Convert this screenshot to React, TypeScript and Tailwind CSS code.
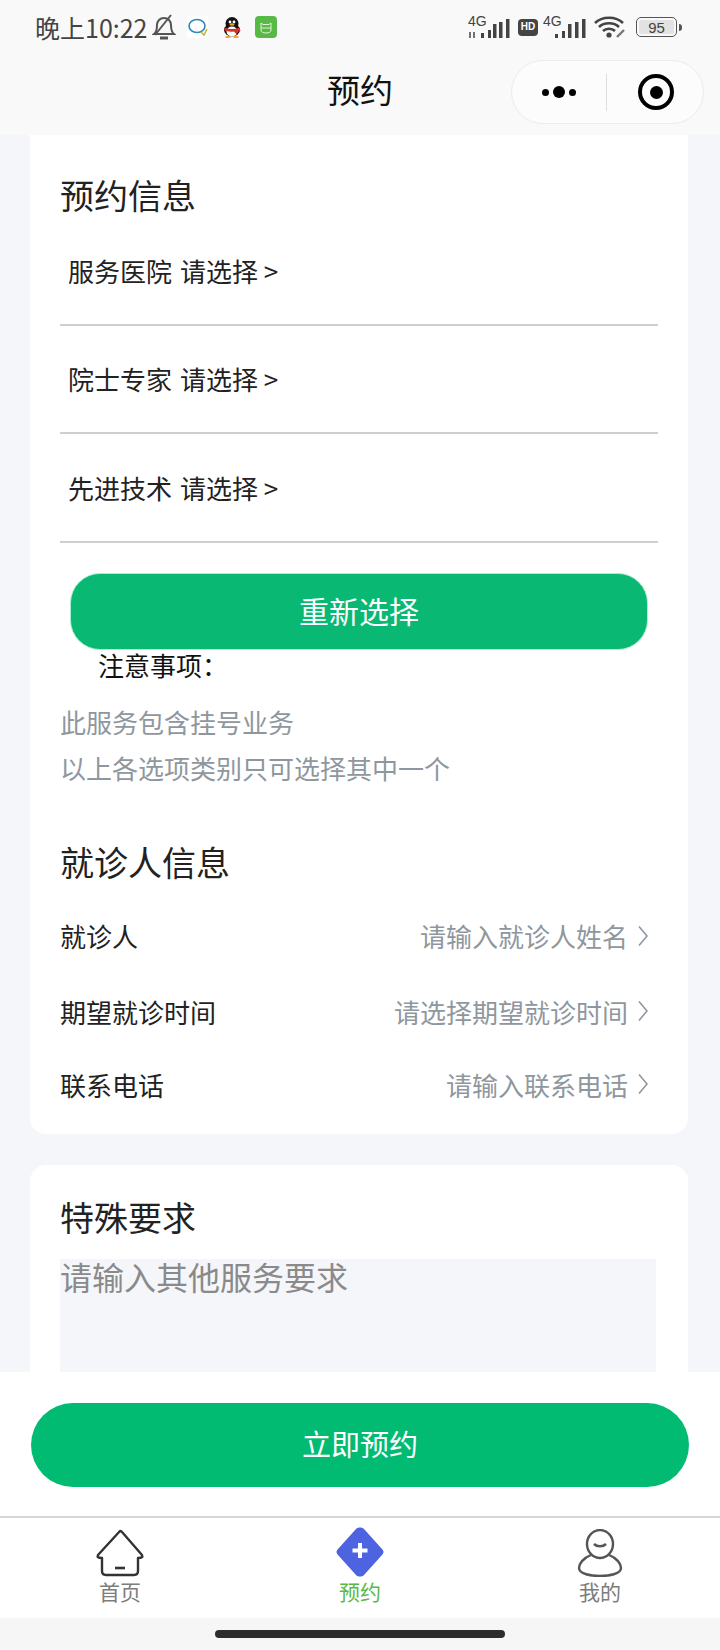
import React from "react";

const font = { fontFamily: '"Noto Sans CJK SC", "Noto Sans", sans-serif' };
const latin = { fontFamily: '"Liberation Sans", sans-serif' };

function Picker({ label }: { label: string }) {
  return (
    <div className="h-[104px] border-b-2 border-[#cfcfcf] pl-2 pt-[29px] text-[26px] leading-[40px] text-[#222]">
      {label}<span className="ml-[8px]">请选择 &gt;</span>
    </div>
  );
}

function InfoRow({ label, hint, h }: { label: string; hint: string; h: string }) {
  return (
    <div className={`flex items-center justify-between text-[26px] ${h}`}>
      <span className="text-[#222]">{label}</span>
      <span className="flex items-center text-[#8f979e]">
        {hint}
        <svg width="10" height="22" viewBox="0 0 10 22" fill="none" className="ml-[10px] mr-[10px]">
          <path d="M1 1.500l8 9.500-8 9.500" stroke="#8f979e" strokeWidth="1.600" />
        </svg>
      </span>
    </div>
  );
}

function StatusBar() {
  return (
    <div className="flex h-[54px] items-center justify-between pl-[35px] pr-[38px]">
      <div className="flex items-center">
        <span className="text-[25px] leading-none text-[#444]">晚上10:22</span>
        <svg width="24" height="26" viewBox="0 0 24 26" fill="none" className="ml-[5px]" stroke="#555" strokeWidth="2">
          <path d="M2 20c3-2 3-6 3-9 0-4 3-7 7-7s7 3 7 7c0 3 0 7 3 9z" />
          <path d="M3 21L19 1" />
          <path d="M8 24h8" strokeWidth="3" />
        </svg>
        <div className="ml-[11px] flex h-[22px] w-[21px] items-center justify-center bg-white">
          <svg width="20" height="18" viewBox="0 0 20 18" fill="none">
            <ellipse cx="9" cy="8" rx="8" ry="6.500" stroke="#2f86b8" strokeWidth="1.600" />
            <path d="M13 14l3 3 3-6" stroke="#c9b23a" strokeWidth="1.600" />
          </svg>
        </div>
        <svg width="20" height="21" viewBox="0 0 20 21" className="ml-[14px]">
          <ellipse cx="10" cy="6.500" rx="6.500" ry="6.500" fill="#111" />
          <ellipse cx="10" cy="13" rx="8" ry="6.500" fill="#111" />
          <ellipse cx="10" cy="14.500" rx="5.500" ry="5" fill="#fff" />
          <circle cx="8" cy="5" r="1.400" fill="#fff" />
          <circle cx="12" cy="5" r="1.400" fill="#fff" />
          <ellipse cx="10" cy="7.500" rx="2.500" ry="1.200" fill="#f0a020" />
          <path d="M2.500 10.500c5 2 10 2 15 0l1 3.500-3.500 1v3l-3-3.500c-4 .5-7 0-9.500-1z" fill="#d3322c" />
          <ellipse cx="6" cy="20" rx="3" ry="1" fill="#f0a020" />
          <ellipse cx="14" cy="20" rx="3" ry="1" fill="#f0a020" />
        </svg>
        <div className="ml-[13px] flex h-[22px] w-[22px] items-center justify-center rounded-[4px] bg-[#58b947]">
          <svg width="14" height="14" viewBox="0 0 14 14" fill="none" stroke="#dff3d8" strokeWidth="1">
            <path d="M2 3l2 1.500h6L12 3v7c0 2-2 3-5 3s-5-1-5-3z" />
            <path d="M2 8h10" />
          </svg>
        </div>
      </div>
      <div className="flex items-center">
        <div className="relative h-[22px] w-[43px]">
          <span className="absolute left-0 top-[-2px] text-[14px] leading-none text-[#444]" style={latin}>4G</span>
          <svg width="43" height="22" viewBox="0 0 43 22" fill="#444" className="absolute left-0 top-0">
            <path d="M2 16v6M6 16v6" stroke="#444" strokeWidth="1.500" />
            <rect x="13" y="17" width="3" height="5" /><rect x="20" y="14" width="3" height="8" />
            <rect x="25" y="8" width="3.500" height="14" /><rect x="31" y="6" width="3.500" height="16" />
            <rect x="38" y="3" width="3.500" height="19" />
          </svg>
        </div>
        <span className="ml-[7px] flex h-[17px] w-[20px] items-center justify-center rounded-[4px] bg-[#444] text-[10px] font-bold leading-none text-white" style={latin}>HD</span>
        <div className="relative ml-[4px] h-[22px] w-[44px]">
          <span className="absolute left-[1px] top-[-2px] text-[14px] leading-none text-[#444]" style={latin}>4G</span>
          <svg width="44" height="22" viewBox="0 0 44 22" fill="#444" className="absolute left-0 top-0">
            <rect x="13" y="18" width="3" height="4" /><rect x="20" y="15" width="3" height="7" />
            <rect x="26" y="8" width="3.500" height="14" /><rect x="33" y="6" width="3.500" height="16" />
            <rect x="40" y="3" width="3.500" height="19" />
          </svg>
        </div>
        <svg width="34" height="22" viewBox="0 0 34 22" fill="none" stroke="#444" strokeWidth="2.600" className="ml-[7px]">
          <path d="M2 7c7-7 21-7 28 0M6 11c5-5 15-5 20 0M10 15c3-3 9-3 12 0" />
          <circle cx="16" cy="19" r="2.600" fill="#444" stroke="none" />
          <path d="M24 21l7-7" strokeWidth="2.400" stroke="#777" />
        </svg>
        <div className="relative ml-[9px] flex h-[20px] w-[41px] items-center rounded-[5px] border border-[#555] p-[2px]">
          <div className="flex h-full w-full items-center justify-center rounded-[2px] bg-[#e2e2e2] text-[15px] leading-none text-[#444]" style={latin}>95</div>
        </div>
        <div className="ml-[2px] h-[7px] w-[3px] rounded-r bg-[#555]" />
      </div>
    </div>
  );
}

function NavBar() {
  return (
    <div className="relative flex h-[81px] items-center justify-center">
      <span className="mt-[-10px] text-[33px] text-[#111]">预约</span>
      <div className="absolute right-[16px] top-[6px] flex h-[64px] w-[193px] items-center rounded-full border border-[#ececec] bg-[#fcfcfc]">
        <div className="flex flex-1 items-center justify-center gap-[4px]">
          <span className="h-[7px] w-[7px] rounded-full bg-black" />
          <span className="h-[12px] w-[12px] rounded-full bg-black" />
          <span className="h-[7px] w-[7px] rounded-full bg-black" />
        </div>
        <div className="h-[37px] w-px bg-[#ddd]" />
        <div className="flex flex-1 items-center justify-center pl-[2px]">
          <div className="flex h-[36px] w-[36px] items-center justify-center rounded-full border-[4px] border-black">
            <span className="h-[13px] w-[13px] rounded-full bg-black" />
          </div>
        </div>
      </div>
    </div>
  );
}

function TabBar() {
  return (
    <div className="flex h-[102px] border-t-2 border-[#d6d6d6] bg-white">
      <div className="flex flex-1 flex-col items-center pt-[11px]">
        <svg width="50" height="48" viewBox="0 0 50 48" fill="none" stroke="#333" strokeWidth="2.400" strokeLinejoin="round">
          <path d="M25 2L3 26c-1 2 0 3 4 3v13c0 3 1 4 4 4h28c3 0 4-1 4-4V29c4 0 5-1 4-3L27 3c-1-1-1-1-2-1z" />
          <path d="M20 39h10" strokeWidth="2.600" />
        </svg>
        <span className="mt-[1px] text-[21px] leading-[26px] text-[#7d7d7d]">首页</span>
      </div>
      <div className="flex flex-1 flex-col items-center pt-[9px]">
        <svg width="48" height="50" viewBox="0 0 48 50" fill="#4d63e0">
          <path d="M20 2c2-2 6-2 8 0l18 20c2 2 2 4 0 6L28 48c-2 2-6 2-8 0L2 28c-2-2-2-4 0-6z" />
          <path d="M24 16v15M16.500 23.500h15" stroke="#fff" strokeWidth="4" />
        </svg>
        <span className="mt-[1px] text-[21px] leading-[26px] text-[#58b947]">预约</span>
      </div>
      <div className="flex flex-1 flex-col items-center pt-[11px]">
        <svg width="46" height="48" viewBox="0 0 46 48" fill="none" stroke="#555" strokeWidth="2.400">
          <ellipse cx="23" cy="15" rx="13" ry="14" />
          <path d="M17 15c3 3 9 3 12 0" strokeWidth="2.600" />
          <path d="M14 26C6 29 2 35 2 39c0 6 12 8 21 8s21-2 21-8c0-4-4-10-12-13" />
        </svg>
        <span className="mt-[1px] text-[21px] leading-[26px] text-[#7d7d7d]">我的</span>
      </div>
    </div>
  );
}

export default function App() {
  return (
    <div className="flex h-[1650px] w-[720px] flex-col overflow-hidden bg-[#f5f6fa]" style={font}>
      <div className="bg-[#f9f9f9]">
        <StatusBar />
        <NavBar />
      </div>
      <div className="flex-1 overflow-hidden pl-[30px] pr-[32px]">
        <div className="rounded-b-[16px] bg-white px-[30px] pb-[15px]">
          <div className="pt-[36px] text-[34px] leading-[48px] text-[#222]">预约信息</div>
          <div className="mt-[3px]">
            <Picker label="服务医院" />
            <div className="h-[4px]" />
            <Picker label="院士专家" />
            <div className="h-[5px]" />
            <Picker label="先进技术" />
          </div>
          <button className="ml-[10px] mt-[30px] block h-[77px] w-[578px] rounded-[30px] border border-[#a8efd0] bg-[#08b873] pb-[3px] text-[30px] text-white">重新选择</button>
          <div className="ml-[38px] mt-[-4px] text-[26px] leading-[38px] text-[#111]">注意事项：</div>
          <div className="mt-[15px] text-[26px] leading-[46px] text-[#8f979e]">此服务包含挂号业务</div>
          <div className="text-[26px] leading-[46px] text-[#8f979e]">以上各选项类别只可选择其中一个</div>
          <div className="mt-[47px] text-[34px] leading-[48px] text-[#222]">就诊人信息</div>
          <div className="mt-[12px]">
            <InfoRow label="就诊人" hint="请输入就诊人姓名" h="h-[75px]" />
            <InfoRow label="期望就诊时间" hint="请选择期望就诊时间" h="h-[76px]" />
            <InfoRow label="联系电话" hint="请输入联系电话" h="h-[70px]" />
          </div>
        </div>
        <div className="mt-[31px] h-[300px] rounded-[16px] bg-white px-[30px]">
          <div className="pt-[28px] text-[34px] leading-[48px] text-[#222]">特殊要求</div>
          <div className="mr-[2px] mt-[18px] h-[200px] bg-[#f5f6fa] text-[32px] leading-[34px] text-[#8a8a8a]">请输入其他服务要求</div>
        </div>
      </div>
      <div className="flex h-[144px] items-start bg-white px-[31px] pt-[31px]">
        <button className="h-[84px] w-full rounded-full bg-[#02bb72] pb-[2px] text-[29px] text-white">立即预约</button>
      </div>
      <TabBar />
      <div className="flex h-[32px] items-center justify-center bg-[#f6f6f6]">
        <div className="h-[8px] w-[290px] rounded-full bg-[#2c2c2c]" />
      </div>
    </div>
  );
}
